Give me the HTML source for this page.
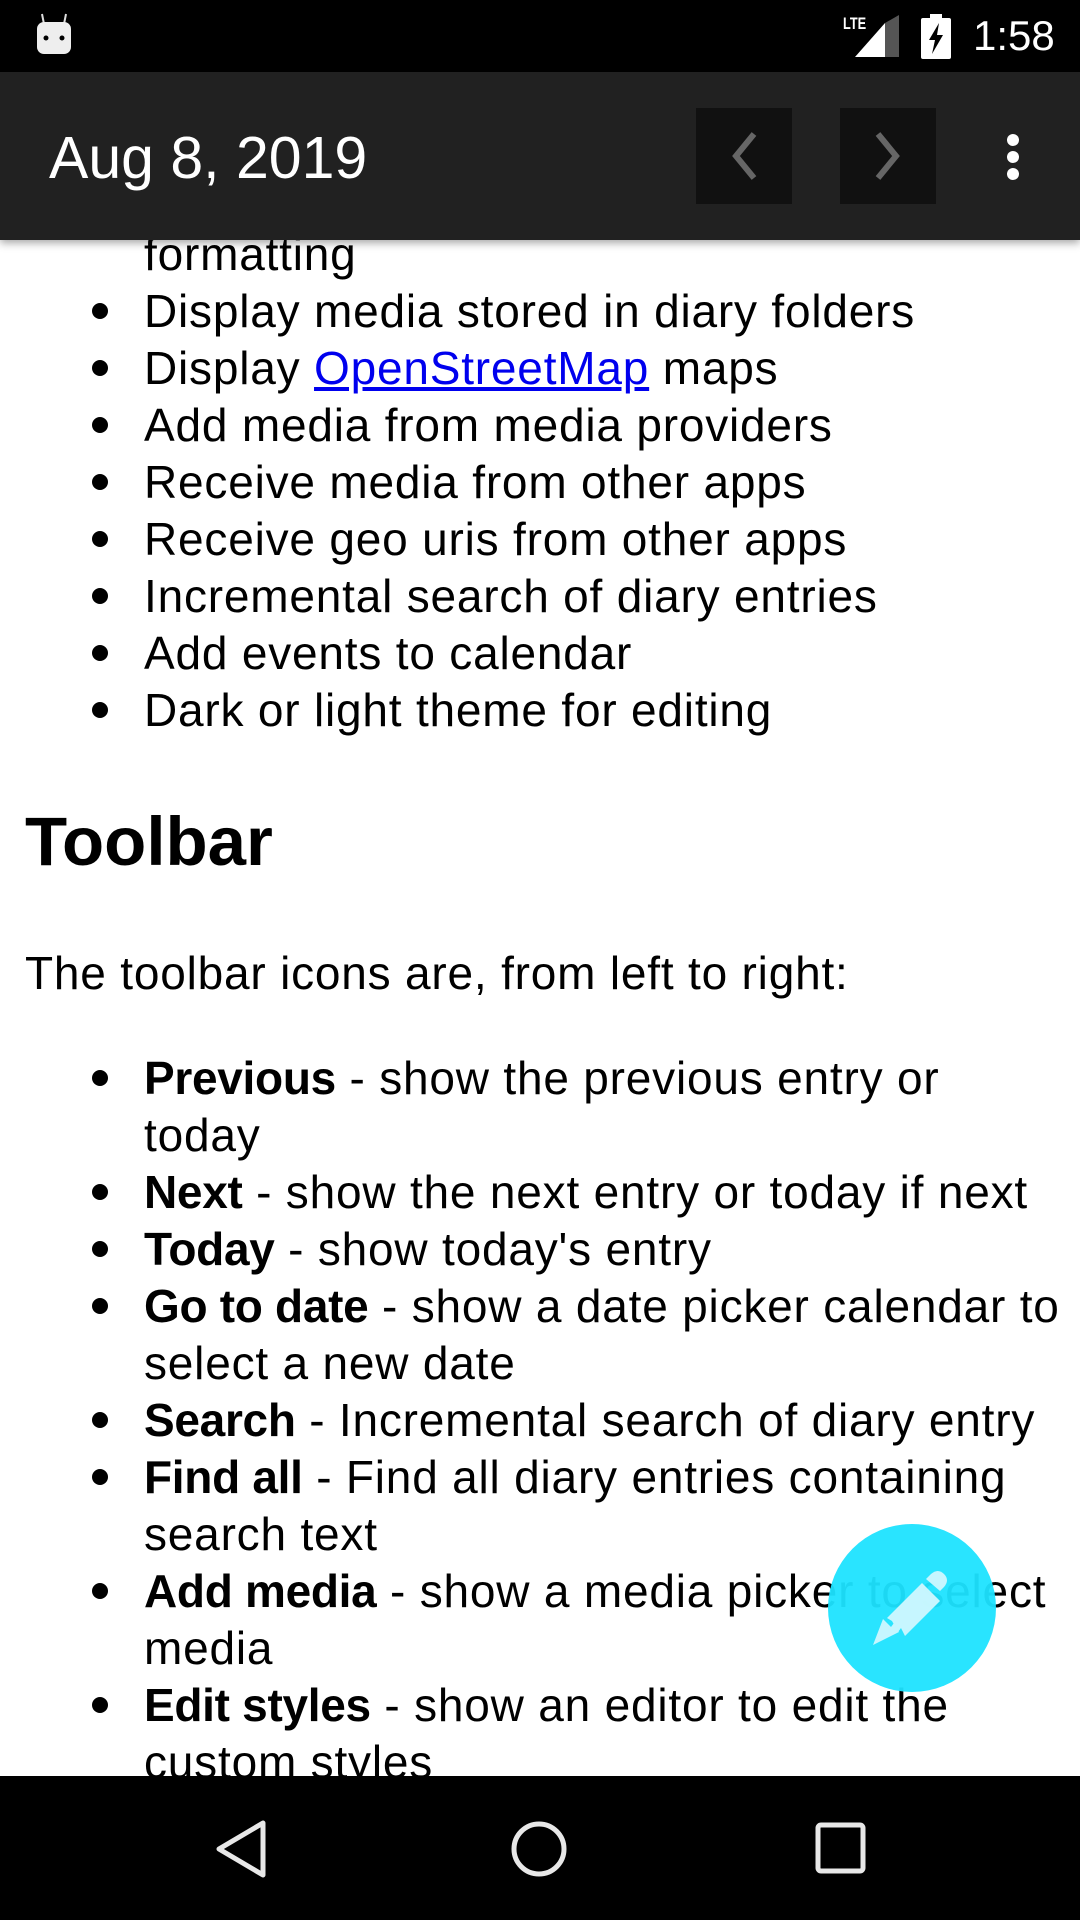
<!DOCTYPE html>
<html><head><meta charset="utf-8"><style>
html,body{margin:0;padding:0;width:1080px;height:1920px;overflow:hidden;background:#fff;font-family:"Liberation Sans",Arial,sans-serif;color:#000;}
.l{position:absolute;left:144px;font-size:46px;letter-spacing:0.8px;line-height:57px;white-space:nowrap;}
.l b{letter-spacing:-0.3px;}
.b{position:absolute;left:92px;width:16px;height:16px;border-radius:50%;background:#000;}
a{color:#0000ee;text-decoration:underline;}
</style></head><body>
<div class="l" style="top:226px">formatting</div>
<div class="b" style="top:303px"></div><div class="l" style="top:283px">Display media stored in diary folders</div>
<div class="b" style="top:360px"></div><div class="l" style="top:340px">Display <a>OpenStreetMap</a> maps</div>
<div class="b" style="top:417px"></div><div class="l" style="top:397px">Add media from media providers</div>
<div class="b" style="top:474px"></div><div class="l" style="top:454px">Receive media from other apps</div>
<div class="b" style="top:531px"></div><div class="l" style="top:511px">Receive geo uris from other apps</div>
<div class="b" style="top:588px"></div><div class="l" style="top:568px">Incremental search of diary entries</div>
<div class="b" style="top:645px"></div><div class="l" style="top:625px">Add events to calendar</div>
<div class="b" style="top:702px"></div><div class="l" style="top:682px">Dark or light theme for editing</div>
<div style="position:absolute;left:25px;top:800px;font-size:69px;font-weight:bold;line-height:84px">Toolbar</div>
<div class="l" style="left:25px;top:945px">The toolbar icons are, from left to right:</div>
<div class="b" style="top:1070px"></div><div class="l" style="top:1050px"><b>Previous</b> - show the previous entry or</div>
<div class="l" style="top:1107px">today</div>
<div class="b" style="top:1184px"></div><div class="l" style="top:1164px"><b>Next</b> - show the next entry or today if next</div>
<div class="b" style="top:1241px"></div><div class="l" style="top:1221px"><b>Today</b> - show today's entry</div>
<div class="b" style="top:1298px"></div><div class="l" style="top:1278px"><b>Go to date</b> - show a date picker calendar to</div>
<div class="l" style="top:1335px">select a new date</div>
<div class="b" style="top:1412px"></div><div class="l" style="top:1392px"><b>Search</b> - Incremental search of diary entry</div>
<div class="b" style="top:1469px"></div><div class="l" style="top:1449px"><b>Find all</b> - Find all diary entries containing</div>
<div class="l" style="top:1506px">search text</div>
<div class="b" style="top:1583px"></div><div class="l" style="top:1563px"><b>Add media</b> - show a media picker to select</div>
<div class="l" style="top:1620px">media</div>
<div class="b" style="top:1697px"></div><div class="l" style="top:1677px"><b>Edit styles</b> - show an editor to edit the</div>
<div class="l" style="top:1734px">custom styles</div>

<!-- FAB -->
<div style="position:absolute;left:828px;top:1524px;width:168px;height:168px;border-radius:50%;background:#1ee3ff;opacity:0.95;"></div>
<svg style="position:absolute;left:828px;top:1524px" width="168" height="168" viewBox="0 0 168 168">
<g fill="#cff8ff" opacity="0.95">
<path d="M45 121 L55 95 L63 103 L66 99 L71 108 Z"/>
<path d="M59 94 L94 59 L112 77 L77 112 L73 104 L70 108 L64 97 Z"/>
<path d="M98 55 L103 50 Q110 44 116 50 Q122 56 116 63 L112 67 Z"/>
</g></svg>

<!-- status bar -->
<div style="position:absolute;left:0;top:0;width:1080px;height:72px;background:#000"></div>
<svg style="position:absolute;left:34px;top:12px" width="40" height="44" viewBox="0 0 40 44">
<path d="M8 2 L10 12 M32 2 L30 12" stroke="#ddd" stroke-width="2"/>
<rect x="3" y="10" width="34" height="32" rx="7" fill="#eee"/>
<circle cx="12" cy="26" r="2.5" fill="#000"/><circle cx="28" cy="26" r="2.5" fill="#000"/>
</svg>
<div style="position:absolute;left:843px;top:14px;color:#fff;font-size:17px;font-weight:bold;transform:scaleX(0.75);transform-origin:left">LTE</div>
<svg style="position:absolute;left:855px;top:15px" width="44" height="42"><path d="M0 42 L30 42 L30 8 Z" fill="#fff"/><path d="M30 42 L44 42 L44 0 L30 8 Z" fill="#555"/></svg>
<svg style="position:absolute;left:921px;top:14px" width="30" height="45" viewBox="0 0 30 45"><rect x="9" y="0" width="12" height="5" fill="#fff"/><rect x="0" y="4" width="30" height="41" rx="2" fill="#fff"/><path d="M18 9 L8 26 L14 26 L11 40 L22 21 L16 21 Z" fill="#000"/></svg>
<div style="position:absolute;left:973px;top:12px;color:#fff;font-size:42px;line-height:48px">1:58</div>

<!-- toolbar -->
<div style="position:absolute;left:0;top:72px;width:1080px;height:168px;background:#212121;box-shadow:0 3px 8px rgba(0,0,0,0.35)"></div>
<div style="position:absolute;left:49px;top:124px;color:#fff;font-size:59px;line-height:68px;font-weight:500">Aug 8, 2019</div>
<div style="position:absolute;left:696px;top:108px;width:96px;height:96px;background:#111"></div>
<div style="position:absolute;left:840px;top:108px;width:96px;height:96px;background:#111"></div>
<svg style="position:absolute;left:696px;top:108px" width="96" height="96"><path d="M58 26 L40 48 L58 70" stroke="#666" stroke-width="6" fill="none"/></svg>
<svg style="position:absolute;left:840px;top:108px" width="96" height="96"><path d="M38 26 L56 48 L38 70" stroke="#666" stroke-width="6" fill="none"/></svg>
<div style="position:absolute;left:1007px;top:134px;width:12px;height:12px;border-radius:50%;background:#fff"></div>
<div style="position:absolute;left:1007px;top:151px;width:12px;height:12px;border-radius:50%;background:#fff"></div>
<div style="position:absolute;left:1007px;top:168px;width:12px;height:12px;border-radius:50%;background:#fff"></div>

<!-- nav bar -->
<div style="position:absolute;left:0;top:1776px;width:1080px;height:144px;background:#000"></div>
<svg style="position:absolute;left:0;top:1776px" width="1080" height="144">
<path d="M263 47 L219 73 L263 99 Z" stroke="#e8e8e8" stroke-width="5" fill="none" stroke-linejoin="round"/>
<circle cx="539" cy="73" r="25" stroke="#e8e8e8" stroke-width="5" fill="none"/>
<rect x="818" y="49" width="45" height="46" rx="3" stroke="#e8e8e8" stroke-width="5" fill="none"/>
</svg>
</body></html>
